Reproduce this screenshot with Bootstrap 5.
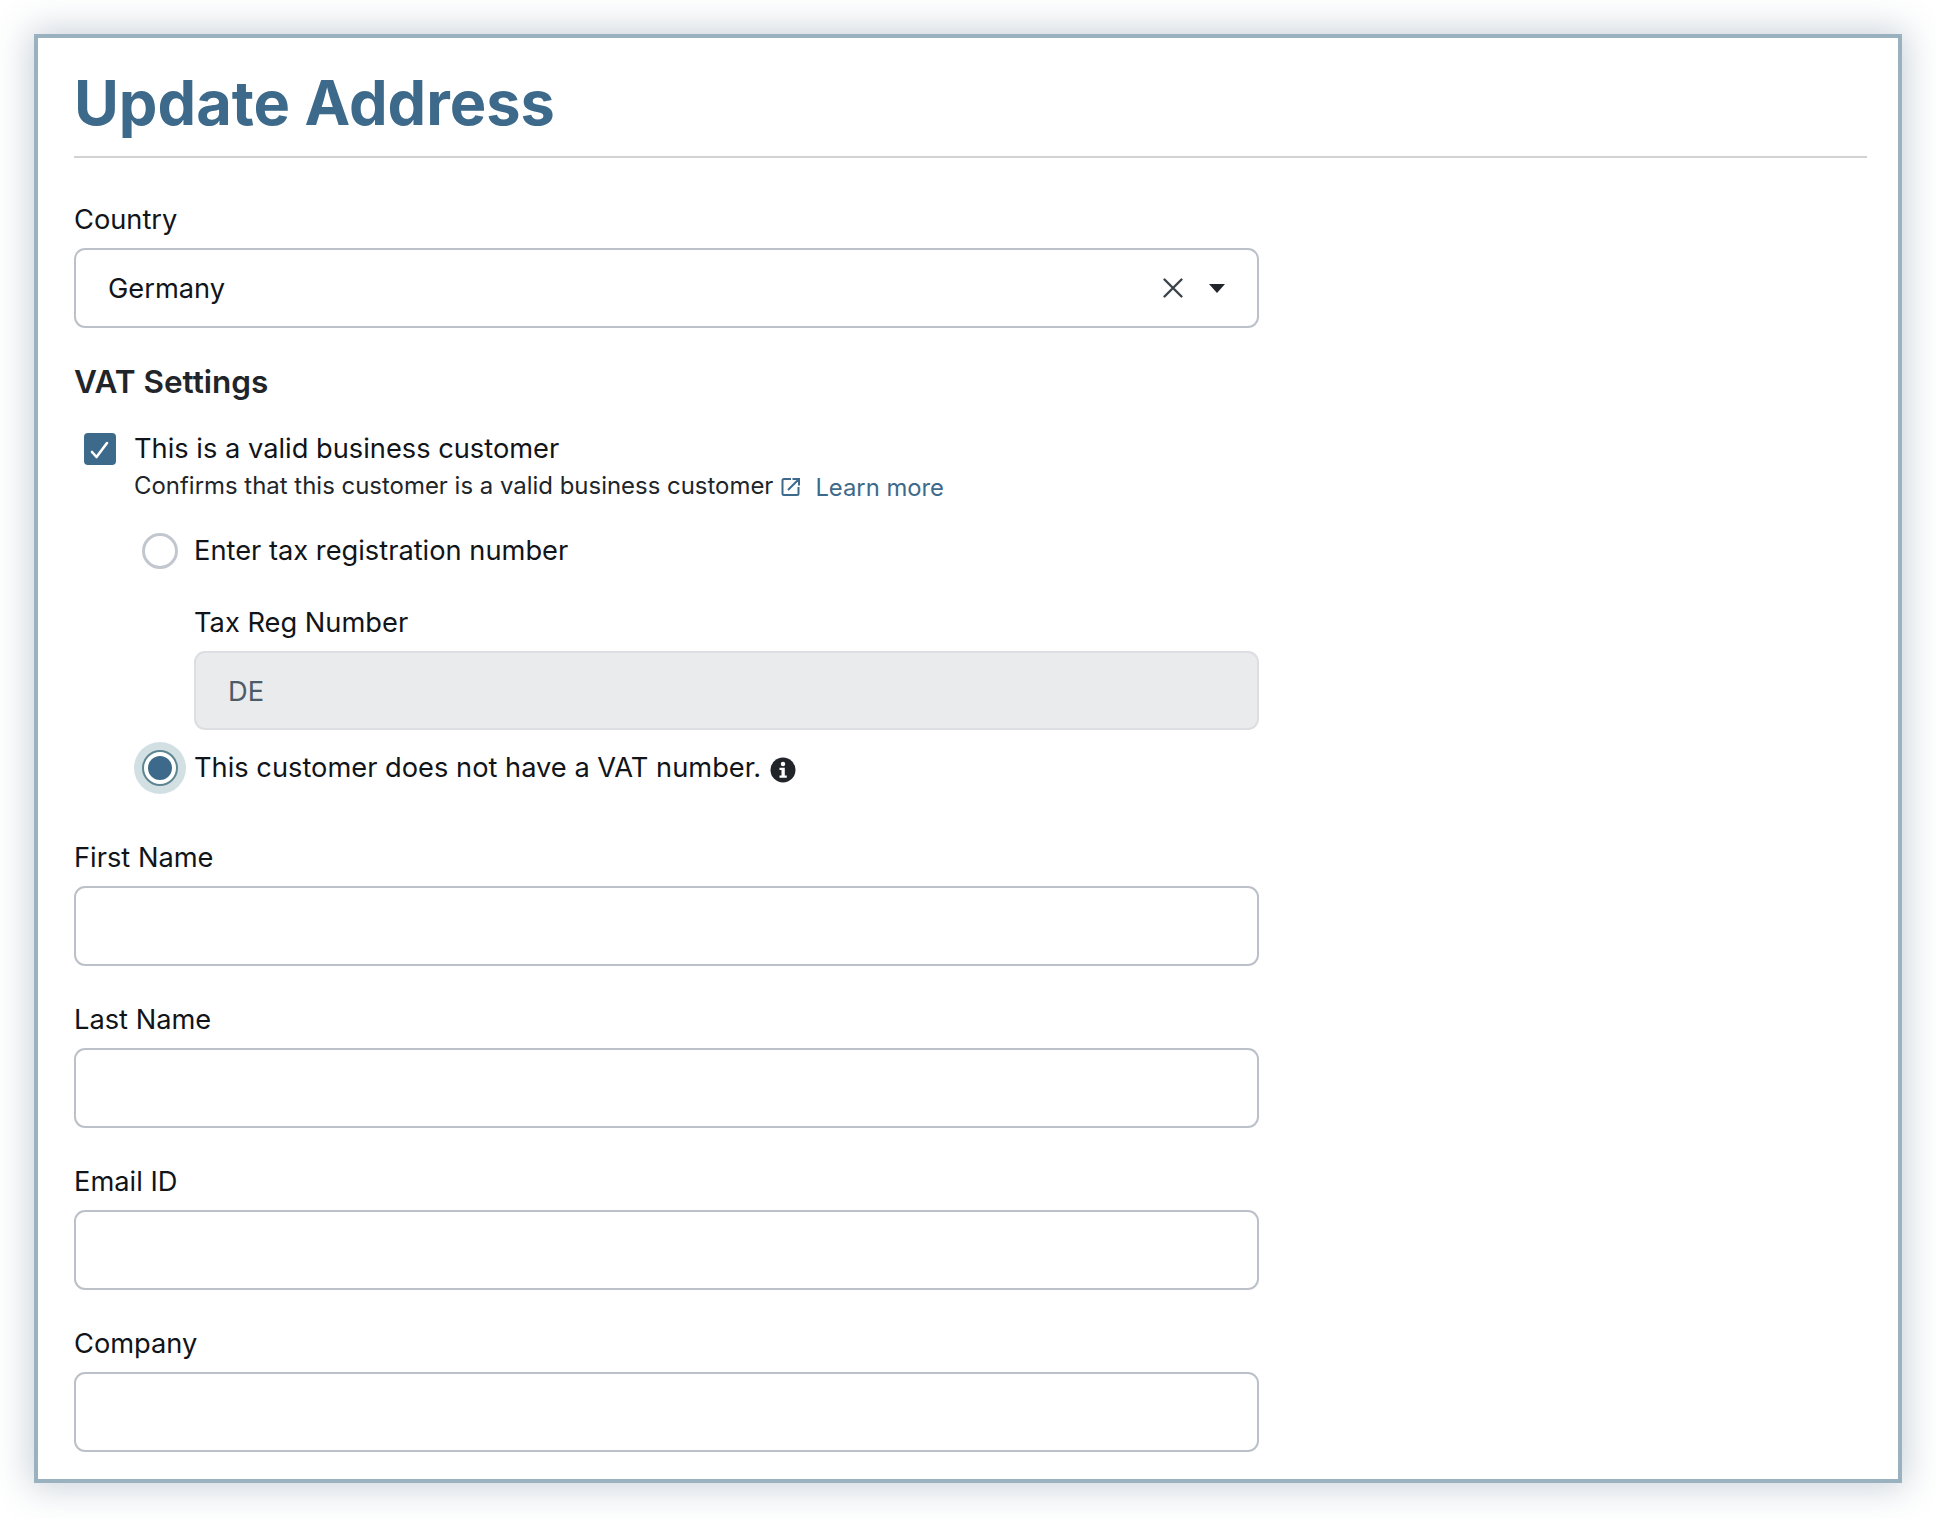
<!DOCTYPE html>
<html lang="en"><head><meta charset="utf-8"><title>Update Address</title>
<link href="https://cdn.jsdelivr.net/npm/bootstrap@5.3.0/dist/css/bootstrap.min.css" rel="stylesheet">
<style>
html,body{background:#fff}
body{font-family:Inter,"Liberation Sans",sans-serif;color:#111418;padding:34px;height:1518px;overflow:hidden}
.frame-box{height:1449px;border:4px solid #9ab2c0;background:#fff;padding:29px 31px 0 36px;box-shadow:0 0 34px 4px rgba(60,90,120,.28)}
.page-title{font-family:Inter,sans-serif;font-weight:700;font-size:61.3px;line-height:72px;color:#3d6a8a;margin:0}
.title-rule{height:2px;background:#d2d2d2;margin:17px 0 45px}
.form-col{width:1185px}
.fld-label{font-size:27.25px;line-height:34px;margin-bottom:11px;display:block;color:#111418}
.fld-input{height:80px;border:2px solid #bcc1c9;border-radius:11px;font-size:27.25px;padding:2px 32px 0;color:#111418;box-shadow:none}
.fld-input:disabled{height:79px;background:#e9ebed;border-color:#dcdee2;color:#4d5a68;opacity:1}
.fld-gap{margin-bottom:37px}
.sel-box{height:80px;border:2px solid #bcc1c9;border-radius:11px;padding:0 32px;font-size:27.25px}
.sel-text{padding-top:2px}
.vat-title{font-size:31.5px;line-height:40px;font-weight:600;color:#212529;margin:34px 0 30px}
.chk-box{width:32px;height:32px;margin:0 18px 0 10px;flex:none}
.row-text{font-size:27.25px;line-height:34px}
.hint-text{font-size:23.95px;line-height:30px;color:#212529;margin:5px 0 0 60px}
.hint-link{color:#3d6a8a;font-size:23.8px;text-decoration:none;margin-left:14px;position:relative;top:2px}
.ext-icon{margin-left:8px;position:relative;top:1px}
.rad-off{width:36px;height:36px;border:3px solid #c2c7cf;border-radius:50%;flex:none;margin-right:16px}
.rad-halo{width:52px;height:52px;border-radius:50%;background:#d3e0e3;flex:none;margin:0 8px 0 -8px}
.rad-ring{width:36px;height:36px;border:2px solid #5f8591;border-radius:50%;background:#fff}
.rad-dot{width:24px;height:24px;border-radius:50%;background:#3d6a8a}
.indent-a{margin-left:68px}
.indent-b{margin-left:120px;margin-top:37px}
.radio-one{margin-top:32px}
.radio-two{margin-top:12px}
.first-field{margin-top:47px}
.info-icon{margin-left:9px;margin-top:4px}
.clear-icon{margin-right:1px}
</style></head><body>
<div class="frame-box">
<h1 class="page-title">Update Address</h1>
<div class="title-rule"></div>
<div class="form-col">
<label class="fld-label">Country</label>
<div class="sel-box d-flex align-items-center bg-white">
<span class="flex-grow-1 sel-text">Germany</span>
<svg class="clear-icon" width="22" height="22" viewBox="0 0 22 22" fill="none" stroke="#3a424b" stroke-width="2.4" stroke-linecap="round"><path d="M2.5 2.5l17 17M19.5 2.5l-17 17"/></svg>
<svg class="ms-4" width="16" height="9" viewBox="0 0 16 9"><path d="M0 0h16L8 9z" fill="#212529"/></svg>
</div>
<div class="vat-title">VAT Settings</div>
<div class="d-flex align-items-center">
<svg class="chk-box" viewBox="0 0 32 32"><rect width="32" height="32" rx="4" fill="#3d6a8a"/><path d="M8 19l4.500 5L23 10" fill="none" stroke="#fff" stroke-width="2.600" stroke-linecap="round" stroke-linejoin="round"/></svg>
<span class="row-text">This is a valid business customer</span>
</div>
<div class="hint-text d-flex align-items-center">Confirms that this customer is a valid business customer
<svg class="ext-icon" width="20" height="20" viewBox="0 0 20 20" fill="none" stroke="#3d6a8a" stroke-width="2"><path d="M10 2H3a1.500 1.500 0 0 0-1.500 1.500v13A1.500 1.500 0 0 0 3 18h13a1.500 1.500 0 0 0 1.500-1.500V10M7 13L17.500 2.500M11.500 2H18V8.500"/></svg>
<a class="hint-link" href="#">Learn more</a></div>
<div class="d-flex align-items-center indent-a radio-one"><span class="rad-off"></span><span class="row-text">Enter tax registration number</span></div>
<div class="indent-b">
<label class="fld-label">Tax Reg Number</label>
<input class="form-control fld-input" value="DE" disabled>
</div>
<div class="d-flex align-items-center indent-a radio-two"><span class="rad-halo d-flex align-items-center justify-content-center"><span class="rad-ring d-flex align-items-center justify-content-center"><span class="rad-dot"></span></span></span><span class="row-text">This customer does not have a VAT number.</span>
<svg class="info-icon" width="26" height="26" viewBox="0 0 26 26"><circle cx="13" cy="13" r="12.500" fill="#212529"/><circle cx="13" cy="7" r="2.200" fill="#fff"/><path d="M9.500 10.800h5.300v7.700h2v2.200H9.500v-2.200h2v-5.500h-2z" fill="#fff"/></svg>
</div>
<div class="fld-gap first-field"><label class="fld-label">First Name</label><input class="form-control fld-input"></div>
<div class="fld-gap"><label class="fld-label">Last Name</label><input class="form-control fld-input"></div>
<div class="fld-gap"><label class="fld-label">Email ID</label><input class="form-control fld-input"></div>
<div><label class="fld-label">Company</label><input class="form-control fld-input"></div>
</div>
</div>
</body></html>
